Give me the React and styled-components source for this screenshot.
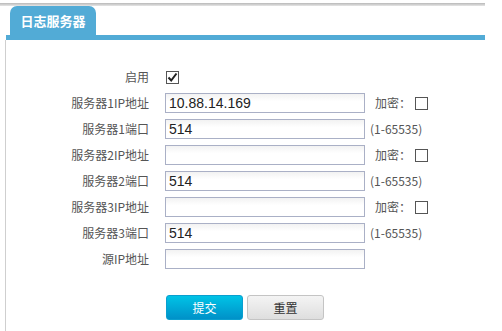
import { Fragment } from 'react';
import styled, { createGlobalStyle } from 'styled-components';

const GlobalStyle = createGlobalStyle`
  body {
    margin: 0;
    background: #fff;
    font-family: "Noto Sans CJK SC", "Liberation Sans", sans-serif;
  }
`;

const Page = styled.div`
  width: 485px;
  padding-top: 3px;
`;

const TopLine = styled.div`
  height: 3px;
  background: linear-gradient(#b8b8b8, #e6e6e6);
`;

const TabBar = styled.div`
  height: 29px;
  padding-left: 10px;
  display: flex;
  align-items: flex-end;
`;

const Tab = styled.div`
  width: 86px;
  height: 29px;
  background: #52abd6;
  border-radius: 7px 7px 0 0;
  color: #fff;
  font-size: 13px;
  font-weight: bold;
  display: flex;
  align-items: center;
  justify-content: center;
`;

const BlueBar = styled.div`
  height: 5px;
  margin-left: 6px;
  background: #52abd6;
`;

const Body = styled.div`
  margin-left: 5px;
  border-left: 1px solid #cfcfcf;
  padding-top: 27px;
  height: 264px;
`;

const Form = styled.div`
  display: grid;
  grid-template-columns: 159px 200px auto;
  row-gap: 6px;
  align-items: center;
`;

const Label = styled.div`
  text-align: right;
  padding-right: 16px;
  font-size: 12px;
  color: #555;
  line-height: 20px;
`;

const Input = styled.input`
  box-sizing: border-box;
  width: 200px;
  height: 20px;
  margin: 0;
  padding: 0 3px;
  border: 1px solid #aab0c6;
  background: linear-gradient(#f2f2f2, #fff 40%);
  font-family: "Liberation Sans", Arial, sans-serif;
  font-size: 14px;
  color: #222;
  outline: none;
`;

const Extra = styled.div`
  display: flex;
  align-items: center;
  font-size: 12px;
  color: #555;
  padding-left: ${p => (p.$enc ? '10px' : '5px')};
  line-height: 20px;
`;

const Box = styled.span`
  box-sizing: border-box;
  display: inline-block;
  width: 13px;
  height: 13px;
  border: 1px solid #555;
  background: #fff;
  margin-left: ${p => p.$ml || 0}px;
  position: relative;
`;

const CheckCell = styled.div`
  display: flex;
  padding-left: 1px;
`;

const Buttons = styled.div`
  display: flex;
  gap: 4px;
  margin: 26px 0 0 160px;
`;

const Button = styled.button`
  width: 77px;
  height: 25px;
  border-radius: 3px;
  font-family: "Noto Sans CJK SC", sans-serif;
  font-size: 12px;
  padding: 0;
  border: 1px solid ${p => (p.$primary ? '#0a9fcf' : '#c4c4c4')};
  background: ${p =>
    p.$primary
      ? 'linear-gradient(#00c3e6, #0091c8)'
      : 'linear-gradient(#f4f4f4, #dedede)'};
  color: ${p => (p.$primary ? '#fff' : '#333')};
`;

const Check = () => (
  <Box>
    <svg width="11" height="11" viewBox="0 0 11 11" style={{ position: 'absolute', left: 0, top: 0 }}>
      <path d="M1.5 5.5 L4.2 8.5 L9.5 1.5" fill="none" stroke="#222" strokeWidth="2" />
    </svg>
  </Box>
);

const rows = [
  { label: '服务器1IP地址', value: '10.88.14.169', enc: true },
  { label: '服务器1端口', value: '514', range: true },
  { label: '服务器2IP地址', value: '', enc: true },
  { label: '服务器2端口', value: '514', range: true },
  { label: '服务器3IP地址', value: '', enc: true },
  { label: '服务器3端口', value: '514', range: true },
  { label: '源IP地址', value: '' },
];

export default function App() {
  return (
    <Page>
      <GlobalStyle />
      <TopLine />
      <TabBar>
        <Tab>日志服务器</Tab>
      </TabBar>
      <BlueBar />
      <Body>
        <Form>
          <Label>启用</Label>
          <CheckCell>
            <Check />
          </CheckCell>
          <div />
          {rows.map(r => (
            <Fragment key={r.label}>
              <Label>{r.label}</Label>
              <Input defaultValue={r.value} />
              {r.enc ? (
                <Extra $enc>
                  加密：<Box $ml={4} />
                </Extra>
              ) : r.range ? (
                <Extra>(1-65535)</Extra>
              ) : (
                <div />
              )}
            </Fragment>
          ))}
        </Form>
        <Buttons>
          <Button $primary>提交</Button>
          <Button>重置</Button>
        </Buttons>
      </Body>
    </Page>
  );
}
